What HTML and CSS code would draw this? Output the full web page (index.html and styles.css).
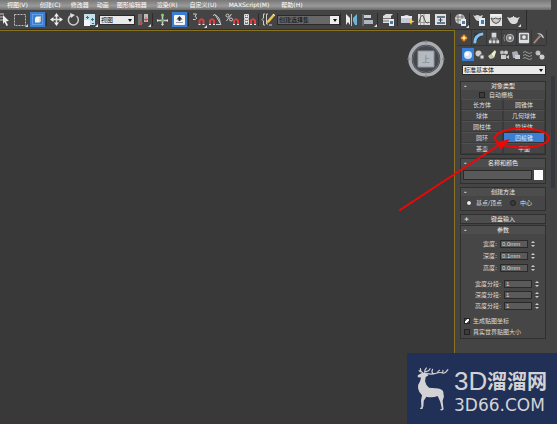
FILE: index.html
```html
<!DOCTYPE html>
<html lang="zh-CN">
<head>
<meta charset="utf-8">
<title>3ds Max</title>
<link rel="stylesheet" href="styles.css">
</head>
<body>
<nav class="menubar">
  <button class="menu">视图(V)</button>
  <button class="menu">创建(C)</button>
  <button class="menu menu-tight">修改器</button>
  <button class="menu menu-tight">动画</button>
  <button class="menu menu-tight">图形编辑器</button>
  <button class="menu">渲染(R)</button>
  <button class="menu">自定义(U)</button>
  <button class="menu">MAXScript(M)</button>
  <button class="menu">帮助(H)</button>
</nav>

<div class="toolrow">
<div class="toolbar">
  <button class="tool tool-first" aria-label="选择"><svg viewBox="0 0 12 17"><path d="M0 3h4M0 6h3M0 9h3" stroke="#ccc"/><path d="M3 4l6 6-3 .3 2 4-1.500.7-2-4L3 13z" fill="#eee"/></svg></button>
  <button class="tool" aria-label="矩形选择区域"><svg viewBox="0 0 17 17"><rect x="2.500" y="3.500" width="11" height="11" fill="none" stroke="#bbb" stroke-dasharray="2 1"/><path d="M16 13v3h-3z" fill="#ddd"/></svg></button>
  <button class="tool" aria-label="窗口/交叉"><svg viewBox="0 0 17 17"><rect x="1" y="1" width="15" height="15" fill="#3b7fd4"/><rect x="3.500" y="3.500" width="10" height="10" fill="none" stroke="#8fbcf0" stroke-dasharray="1 1"/><path d="M6 7l1.500-1.500H12V10l-1.500 1.500H6z" fill="#f6f2e4"/><path d="M10.500 7L12 5.500V10l-1.500 1.500z" fill="#c9c9c0"/></svg></button>
  <i class="sep"></i>
  <button class="tool" aria-label="移动"><svg viewBox="0 0 17 17"><path d="M8.500 5v7M5 8.500h7" stroke="#ddd" stroke-width="1.500"/><path d="M8.500 2l2.500 3.500H6zM8.500 15L6 11.500h5zM2 8.500L5.500 6v5zM15 8.500L11.500 11V6z" fill="#eee"/></svg></button>
  <button class="tool" aria-label="旋转"><svg viewBox="0 0 17 17"><path d="M6 4.500a5 5 0 1 0 5.500.5" fill="none" stroke="#ccc" stroke-width="1.500"/><path d="M5 2l5 2-4 3z" fill="#ddd"/></svg></button>
  <button class="tool" aria-label="缩放"><svg viewBox="0 0 17 17"><rect x="2" y="3" width="11" height="11" fill="#c6dfe9"/><rect x="2" y="9" width="6" height="6" fill="#f2f6f8"/><path d="M9 8.500h3M10.500 7v3M4 6.500h3M5.500 5v3M10 12.500h2" stroke="#367287"/><path d="M16 13v3h-3z" fill="#eee"/></svg></button>
  <span class="pick pick-light"><select aria-label="参考坐标系"><option>视图</option></select></span>
  <button class="tool" aria-label="轴心"><svg viewBox="0 0 17 17"><path d="M3 3h4v11H3z" fill="#777"/><path d="M9 3h4v8H9z" fill="#bbb"/><path d="M4 12.500h4M6 10.500v4M9 8.500h4M11 6.500v4" stroke="#f33"/><path d="M16 13v3h-3z" fill="#ddd"/></svg></button>
  <i class="sep"></i>
  <button class="tool" aria-label="操纵"><svg viewBox="0 0 17 17"><path d="M8.500 4v10M4 9.500h9" stroke="#ccc" stroke-width="1.500"/><circle cx="8.500" cy="4" r="1.500" fill="#7ad65a"/><circle cx="8.500" cy="9.500" r="1.500" fill="#72b85f"/><path d="M3 8l2 1.500L3 11zM14 8l-2 1.500 2 1.500zM7 13h3l-1.500 2z" fill="#ddd"/></svg></button>
  <button class="tool" aria-label="键盘快捷键覆盖切换"><svg viewBox="0 0 17 17"><rect x="1" y="1" width="15" height="15" fill="#3b7fd4"/><rect x="3" y="4" width="11" height="10" rx="1" fill="#f5f5f2"/><path d="M8.500 5l3 3.500h-2v1.500h-2V8.500h-2z" fill="#334"/><path d="M5 11.500h7" stroke="#99a"/></svg></button>
  <i class="sep"></i>
  <button class="tool" aria-label="捕捉开关"><svg viewBox="0 0 17 17"><path d="M3 3h3.500L5 5.500q2 .5 1.500 2T3 8.500" fill="none" stroke="#ccc"/><path d="M9.500 13V9.500q2-2.500 4 0V13" fill="none" stroke="#d94141" stroke-width="2"/><path d="M8.500 13.500h2M12.500 13.500h2" stroke="#eee"/><path d="M17 14v3h-3z" fill="#ddd"/></svg></button>
  <button class="tool" aria-label="角度捕捉"><svg viewBox="0 0 17 17"><path d="M6 4.500l2-1 6 10H9M8 4Q13 6 13 12" fill="none" stroke="#ccc"/><path d="M3 13V9.500q2-2.500 4 0V13" fill="none" stroke="#d94141" stroke-width="2"/><path d="M2 13.500h2M6 13.500h2" stroke="#eee"/></svg></button>
  <button class="tool" aria-label="百分比捕捉"><svg viewBox="0 0 17 17"><path d="M7.500 3l-5 7" stroke="#ccc"/><circle cx="3.500" cy="4.500" r="1.500" fill="none" stroke="#ccc"/><circle cx="7" cy="8.500" r="1.500" fill="none" stroke="#ccc"/><path d="M10 13V9.500q2-2.500 4 0V13" fill="none" stroke="#d94141" stroke-width="2"/><path d="M9 13.500h2M13 13.500h2" stroke="#eee"/></svg></button>
  <button class="tool" aria-label="微调器捕捉"><svg viewBox="0 0 17 17"><path d="M3.500 3.500h4v4h-4zM3.500 8.500h4v5h-4z" fill="#777" stroke="#ddd"/><path d="M4 6h3L5.500 4zM4 10h3l-1.500 2z" fill="#fff"/><path d="M10 13V9.500q2-2.500 4 0V13" fill="none" stroke="#d94141" stroke-width="2"/><path d="M9 13.500h2M13 13.500h2" stroke="#eee"/></svg></button>
  <i class="sep"></i>
  <button class="tool" aria-label="编辑命名选择集"><svg viewBox="0 0 17 17"><path d="M5 3H3.500v4L2 8.500 3.500 10v4H5M8 3H6.500v10H8M9 14h3" fill="none" stroke="#ccc"/><path d="M7 10l6-7 2 1.500-6 7-2.500.5z" fill="#f0c14b"/><path d="M13 3l2 1.500" stroke="#fff"/></svg></button>
  <span class="pick pick-dark"><select aria-label="命名选择集"><option>创建选择集</option></select></span>
  <i class="sep sep-wide"></i>
  <button class="tool" aria-label="镜像"><svg viewBox="0 0 17 17"><path d="M3 3l4 4v7l-2-3-2 3z" fill="#eee"/><path d="M14 3l-4 4v3l2 4h2z" fill="#6cb4dc"/><path d="M8.500 3v12" stroke="#9cc"/></svg></button>
  <button class="tool" aria-label="对齐"><svg viewBox="0 0 17 17"><path d="M3 3v12" stroke="#888"/><path d="M4 4h7v3H4z" fill="#c9ced8"/><path d="M4 9h9v4H4z" fill="#aeb4c2"/><path d="M17 13v3h-3z" fill="#ddd"/></svg></button>
  <i class="sep sep-wide"></i>
  <button class="tool" aria-label="层管理器"><svg viewBox="0 0 17 17"><path d="M3 5l3-2h7l-2 2v7H3z" fill="#ddd"/><path d="M3 7.500h8M3 10h8" stroke="#777"/><path d="M9 8h5v7H9z" fill="#e6eef6"/><path d="M10 10h3v3h-3z" fill="#477caf"/></svg></button>
  <i class="sep"></i>
  <button class="tool" aria-label="石墨建模工具"><svg viewBox="0 0 17 17"><path d="M2 5h3l1-1h3l1 1h3v7H2z" fill="#c3cbd9"/><path d="M2 5h11v2H2z" fill="#e7ebf1"/><path d="M12 7l1 2.500 2.500 1-2.500 1-1 2.500-1-2.500-2-1 2-1z" fill="#ffc84b"/></svg></button>
  <button class="tool" aria-label="曲线编辑器"><svg viewBox="0 0 17 17"><rect x="2" y="3" width="12" height="11" fill="#e1e1dc"/><path d="M4.500 3v11M2 11.500h12M8 3v11" stroke="#999"/><path d="M3 11q3-11 5-4t5 4" fill="none" stroke="#555"/></svg></button>
  <button class="tool" aria-label="图解视图"><svg viewBox="0 0 17 17"><rect x="2" y="3" width="11" height="11" fill="#dfe2e4"/><path d="M4 5h8v2H4zM4 11h8v2H4z" fill="#66788a"/><path d="M7.500 7v4M5.500 9h4" stroke="#345"/></svg></button>
  <i class="sep"></i>
  <button class="tool" aria-label="材质编辑器"><svg viewBox="0 0 17 17"><circle cx="8" cy="8" r="5" fill="#dcdcdc"/><path d="M4 6h8M3 9h10M6 3v10M10 3v10" stroke="#777"/><path d="M9 8h5v7H9z" fill="#e6eef6"/><path d="M10 10h3v3h-3z" fill="#477caf"/><path d="M17 14v3h-3z" fill="#ddd"/></svg></button>
  <i class="sep"></i>
  <button class="tool" aria-label="渲染设置"><svg viewBox="0 0 17 17"><path d="M2 4l2 1q2-2 5 0l3-1-2 5q-3 2-5 0z" fill="#d5d5d5"/><path d="M8 7h6v8H8z" fill="#e6eef6"/><path d="M10 9h3v4h-3z" fill="#477caf"/></svg></button>
  <button class="tool" aria-label="渲染帧窗口"><svg viewBox="0 0 17 17"><rect x="2" y="3" width="12" height="12" fill="#e3e3df"/><path d="M3 4h10" stroke="#fff"/><path d="M3 7l2 1q3-2 5 0l3-1-2 4q-3 3-6 0z" fill="#c8c8c8" stroke="#555"/></svg></button>
  <button class="tool" aria-label="渲染产品"><svg viewBox="0 0 17 17"><path d="M2 6l3 1q1-1 3-1V5h1v1q2 0 3 1l3-1-2 3q0 3-3 4H7q-2-1-3-3z" fill="#d9d9d9"/><path d="M16 13v3h-3z" fill="#ddd"/></svg></button>
</div>
</div>

<main class="work">
  <section class="viewport">
    <svg class="cube" viewBox="0 0 38 40" role="img" aria-label="ViewCube">
      <circle cx="19" cy="20" r="16" fill="none" stroke="#a9adb2" stroke-width="3.500"/>
      <circle cx="19" cy="20" r="13.500" fill="#45494e" stroke="#6b6e72"/>
      <path d="M11 12h16v16H11z" fill="#b5bac0" stroke="#92979d"/>
      <path d="M19 1v3M19 36v3M0 20h3M35 20h3" stroke="#777"/>
      <text class="cube-face" x="19" y="23" text-anchor="middle">上</text>
    </svg>
  </section>

  <aside class="panel">
    <div class="tabs">
      <button class="tab" aria-label="创建"><svg viewBox="0 0 15 15"><circle cx="7.500" cy="7.500" r="3.500" fill="#a8531c"/><path d="M7.500 3l1 3 3 1.500-3 1.500-1 3-1-3-3-1.500 3-1.500z" fill="#ffa52e"/><circle cx="7.500" cy="7.500" r="1.500" fill="#fff4b8"/></svg></button>
      <button class="tab" aria-label="修改"><svg viewBox="0 0 15 15"><path d="M2 2h11L3 13z" fill="#29394a"/><path d="M3 13Q3 4 12 3" fill="none" stroke="#87c2ed" stroke-width="3"/></svg></button>
      <button class="tab" aria-label="层次"><svg viewBox="0 0 15 15"><path d="M5 2h5v5H5zM2 10h3v3H2zM6 10h3v3H6zM10 10h3v3h-3z" fill="#d8dadd"/><path d="M7.500 6v4M3.500 10V8.500h8V10" fill="none" stroke="#999"/></svg></button>
      <button class="tab" aria-label="运动"><svg viewBox="0 0 15 15"><circle cx="8.500" cy="7.500" r="4" fill="#777" stroke="#bbb"/><circle cx="8.500" cy="7.500" r="1.500" fill="#e3e3e3"/><path d="M3 4q-2 3.500 0 7" fill="none" stroke="#888"/></svg></button>
      <button class="tab" aria-label="显示"><svg viewBox="0 0 15 15"><rect x="2" y="2" width="11" height="11" rx="1" fill="#dfe0e2"/><rect x="3.500" y="3.500" width="8" height="6" fill="#66696c"/><circle cx="7.500" cy="6.500" r="2" fill="#e8e8e8"/></svg></button>
      <button class="tab" aria-label="实用程序"><svg viewBox="0 0 15 15"><path d="M2 13l7-8" stroke="#a9847f" stroke-width="2"/><path d="M5 3q4-2 7 2l1 3-2-1-2-3z" fill="#c5c8cb"/></svg></button>
    </div>
    <div class="cats">
      <button class="cat cat-on" aria-label="几何体"><svg viewBox="0 0 12 12"><circle cx="6" cy="6" r="4" fill="#d4e3f5"/><circle cx="5" cy="5" r="2" fill="#fff"/></svg></button>
      <button class="cat" aria-label="图形"><svg viewBox="0 0 12 12"><circle cx="4.500" cy="4.500" r="3" fill="#ccc"/><path d="M6 6h4v4H6z" fill="#ddd" stroke="#555"/></svg></button>
      <button class="cat" aria-label="灯光"><svg viewBox="0 0 12 12"><path d="M9 1l1 2-2 6-3-4z" fill="#eef2c5"/><path d="M5 5l3 4-4 1-2-3z" fill="#c7c7b8"/></svg></button>
      <button class="cat" aria-label="摄影机"><svg viewBox="0 0 12 12"><circle cx="4" cy="3.500" r="2" fill="#bbb"/><circle cx="8" cy="3.500" r="2" fill="#ccc"/><path d="M3 6h5v4H3zM8 8l3-2v4z" fill="#ccc"/></svg></button>
      <button class="cat" aria-label="辅助对象"><svg viewBox="0 0 12 12"><path d="M2 3l5-1 3 7H3z" fill="#a9adb5"/><path d="M5 6h5v4H5z" fill="#ccc"/></svg></button>
      <button class="cat" aria-label="空间扭曲"><svg viewBox="0 0 12 12"><path d="M1 3.500q2-2 4 0t5 0M1 6.500q2-2 4 0t5 0M1 9.500q2-2 4 0t5 0" fill="none" stroke="#999"/></svg></button>
      <button class="cat" aria-label="系统"><svg viewBox="0 0 12 12"><circle cx="4" cy="4" r="2.500" fill="#bbb"/><circle cx="8" cy="8" r="2.500" fill="#ccc"/><path d="M4 4l4 4" stroke="#ddd"/></svg></button>
    </div>
    <span class="pick pick-wide"><select aria-label="对象类别"><option>标准基本体</option></select></span>

    <section class="rollout">
      <button class="head"><span class="sign">-</span>对象类型</button>
      <label class="auto"><input type="checkbox">自动栅格</label>
      <div class="types">
        <button>长方体</button><button>圆锥体</button>
        <button>球体</button><button>几何球体</button>
        <button>圆柱体</button><button>管状体</button>
        <button>圆环</button><button class="on">四棱锥</button>
        <button>茶壶</button><button>平面</button>
      </div>
      <svg class="mark" viewBox="0 0 152 84" aria-hidden="true">
        <ellipse cx="123" cy="11" rx="27" ry="9.500" fill="none" stroke="#f00606" stroke-width="2"/>
        <path d="M1 83L103 16" stroke="#f00606" stroke-width="2" stroke-linecap="round"/>
        <path d="M111 12l-9 11-2-4-5-3z" fill="#f00606"/>
      </svg>
    </section>

    <section class="rollout">
      <button class="head"><span class="sign">-</span>名称和颜色</button>
      <div class="name">
        <input type="text" aria-label="名称"><button class="swatch" aria-label="颜色"></button>
      </div>
    </section>

    <section class="rollout">
      <button class="head"><span class="sign">-</span>创建方法</button>
      <div class="method">
        <label><input type="radio" name="method" checked>基点/顶点</label>
        <label><input type="radio" name="method">中心</label>
      </div>
    </section>

    <section class="rollout">
      <button class="head"><span class="sign">+</span>键盘输入</button>
    </section>

    <section class="rollout rollout-close">
      <button class="head"><span class="sign">-</span>参数</button>
      <div class="fields fields-size">
        <label for="w">宽度:</label><input id="w" type="text" value="0.0mm"><i class="spin"></i>
        <label for="d">深度:</label><input id="d" type="text" value="0.1mm"><i class="spin"></i>
        <label for="h">高度:</label><input id="h" type="text" value="0.0mm"><i class="spin"></i>
      </div>
      <div class="fields fields-seg">
        <label for="ws">宽度分段:</label><input id="ws" type="text" value="1"><i class="spin"></i>
        <label for="ds">深度分段:</label><input id="ds" type="text" value="1"><i class="spin"></i>
        <label for="hs">高度分段:</label><input id="hs" type="text" value="1"><i class="spin"></i>
      </div>
      <div class="checks">
        <label><input type="checkbox" checked>生成贴图坐标</label>
        <label><input type="checkbox">真实世界贴图大小</label>
      </div>
    </section>
  </aside>
  <div class="track"><div class="thumb"></div></div>
</main>

<div class="brand">
  <svg class="deer" viewBox="46 80 102 136" aria-hidden="true">
    <path d="M54 105L66 98l10-1 7 4 3 5-8 4-2 13q3 14 12 20l28 2q12 2 15 10l2 15-4 13 3 25-3 3h-7l1-4 4-1-5-21-8-17q-15 6-34 2l-8 12-1 16-3 9h-7l1-4 3-1-1-22 3-15q-10-8-12-20-2-12 6-22l3-11-10-1z" fill="#d3d3d5"/>
    <path d="M70 98q-9-5-8-13M67 95q-6 0-9-4M75 98q-2-8 5-15M77 94q12-1 14-9M80 99q15 5 29 0t22 0q8-1 14-11M100 100q-6-5-1-13M114 98q-1-5 6-8M128 98q3-4 2-8" fill="none" stroke="#d3d3d5" stroke-width="3.500" stroke-linecap="round"/>
  </svg>
  <div class="brand-text">
    <div class="brand-name"><span class="brand-latin">3D</span>溜溜网</div>
    <div class="brand-site">3D66.COM</div>
  </div>
</div>
</body>
</html>
```

FILE: styles.css
```css
* { box-sizing: border-box; }

body {
  margin: 0;
  min-height: 100vh;
  display: flex;
  flex-direction: column;
  position: relative;
  overflow: hidden;
  background: #444;
  color: #dedede;
  font: 6px/8px "DejaVu Sans", "Noto Sans CJK SC", sans-serif;
}

button, input, select {
  margin: 0;
  padding: 0;
  border: 0;
  border-radius: 0;
  background: none;
  color: inherit;
  font: inherit;
}

svg { display: block; }

/* menu bar */
.menubar {
  display: flex;
  height: 10px;
  margin-right: 6px;
  padding-left: 1px;
  background: linear-gradient(#787878, #9a9a9a 60%, #6a6a6a);
}
.menu { padding: 0 6px; color: #fff; white-space: nowrap; }
.menu-tight { padding: 0 4px; }

/* main toolbar */
.toolrow { display: flex; height: 20px; }
.toolbar {
  display: flex;
  align-items: center;
  padding-right: 4px;
  border-right: 1px solid #2a2a2a;
  border-bottom: 1px solid #303030;
}
.tool { width: 17px; height: 17px; }
.tool-first { width: 12px; }
.sep { width: 2px; height: 13px; border-left: 1px solid #2c2c2c; }
.sep-wide { width: 3px; }

/* drop-downs */
.pick { position: relative; display: block; height: 10px; }
.pick select {
  display: block;
  width: 100%;
  height: 100%;
  padding: 0 10px 0 1px;
  border: 1px solid #2a2a2a;
  background: #e9e9e9;
  color: #111;
  line-height: 8px;
  appearance: none;
}
.pick::after {
  content: "";
  position: absolute;
  right: 3px;
  top: 4px;
  border: 2px solid transparent;
  border-top: 3px solid #111;
  border-bottom: 0;
  pointer-events: none;
}
.pick-light { width: 36px; }
.pick-dark { width: 63px; }
.pick-dark select {
  background: linear-gradient(90deg, #686868 calc(100% - 9px), #eee calc(100% - 9px));
  color: #080808;
}
.pick-wide { margin: 4px 0 6px 2px; }

/* work area */
.work { flex: 1; display: flex; border-bottom: 3px solid #3c363a; }
.viewport {
  flex: 1;
  display: flex;
  justify-content: flex-end;
  align-items: flex-start;
  padding: 8px 9px;
  border-top: 1px solid #8a7320;
  border-right: 1px solid #8a7320;
  background: #393939;
}
.cube { width: 38px; height: 40px; }
.cube-face { font-size: 8px; fill: #777c82; }

/* command panel */
.panel { width: 91px; padding-left: 5px; }
.tabs { display: flex; margin-left: -3px; border-bottom: 1px solid #333; }
.tab { flex: none; width: 15px; height: 15px; border-right: 1px solid #363636; }
.cats { display: grid; grid-template-columns: repeat(7, 12px); justify-content: space-between; margin: 2px 0 0 2px; }
.cat { height: 13px; }
.cat svg { width: 12px; height: 12px; }
.cat-on { background: #3b7fd4; }

.track { width: 11px; padding: 46px 2px 0 5px; }
.thumb { height: 112px; background: #363a3f; }

.rollout {
  position: relative;
  margin-bottom: 3px;
  border: 1px solid #303030;
  background: #464646;
}
.rollout:has(+ .rollout-close) { margin-bottom: 1px; }
.head {
  position: relative;
  display: block;
  width: 100%;
  height: 8px;
  background: #4d4d4d;
  color: #eee;
  line-height: 8px;
  text-align: center;
}
.sign { position: absolute; left: 3px; top: 0; font-weight: bold; }

input[type="checkbox"], input[type="radio"] {
  appearance: none;
  flex: none;
  width: 6px;
  height: 6px;
  border: 1px solid #222;
  background: #3c3c3c;
}
input[type="radio"] { border-radius: 50%; }
input[type="radio"]:checked { border-color: #333; background: #eee; }
.checks input:checked {
  background: linear-gradient(135deg, #555 30%, #fff 30%, #fff 70%, #555 70%);
}

.auto { display: flex; align-items: center; gap: 4px; height: 9px; padding-left: 18px; }
.types { display: grid; grid-template-columns: 1fr 1fr; grid-auto-rows: 11px; }
.types button {
  border: 1px solid #3a3a3a;
  border-top-color: #505050;
  background: #454545;
  line-height: 8px;
}
.types .on { background: #3b7fd4; border-color: #333; color: #dce8f6; }

.mark {
  position: absolute;
  right: -6px;
  bottom: -57px;
  width: 152px;
  height: 84px;
  z-index: 2;
  pointer-events: none;
}

.name { display: flex; gap: 2px; padding: 3px 2px; }
.name input { flex: 1; min-width: 0; height: 10px; border: 1px solid #2a2a2a; background: #595959; }
.swatch { width: 9px; height: 10px; background: #fff; }

.method { display: flex; gap: 8px; padding: 3px 5px; }
.method label { display: flex; align-items: center; gap: 4px; height: 8px; }

.fields { display: grid; align-items: center; column-gap: 3px; }
.fields label { text-align: right; }
.fields input {
  width: 100%;
  height: 8px;
  padding-left: 1px;
  border: 1px solid #2a2a2a;
  background: #5a5a5a;
  font-family: "Liberation Sans", sans-serif;
  line-height: 6px;
}
.fields-size { grid-template-columns: 36px 28px 5px; grid-auto-rows: 12px; margin-top: 4px; }
.fields-seg { grid-template-columns: 40px 28px 5px; grid-auto-rows: 11px; margin-top: 4px; }
.spin { display: grid; gap: 2px; justify-items: start; }
.spin::before, .spin::after { content: ""; width: 0; border: 2px solid transparent; }
.spin::before { border-bottom-color: #ccc; border-top: 0; }
.spin::after { border-top-color: #ccc; border-bottom: 0; }

.checks { margin: 4px 0 1px 3px; }
.checks label { display: flex; align-items: center; gap: 3px; height: 11px; white-space: nowrap; }

/* brand plate */
.brand {
  position: absolute;
  right: 0;
  bottom: 0;
  z-index: 3;
  display: flex;
  gap: 5px;
  width: 150px;
  height: 71px;
  padding: 14px 0 0 8px;
  background: #213056;
  color: #d3d3d5;
}
.deer { width: 34px; height: 45px; }
.brand-text { white-space: nowrap; }
.brand-name { display: flex; align-items: center; font: bold 20px/28px "Noto Sans CJK SC", sans-serif; }
.brand-latin { width: 33px; font: 26px/28px "Liberation Sans", sans-serif; }
.brand-site { font-size: 17px; line-height: 20px; }
```
